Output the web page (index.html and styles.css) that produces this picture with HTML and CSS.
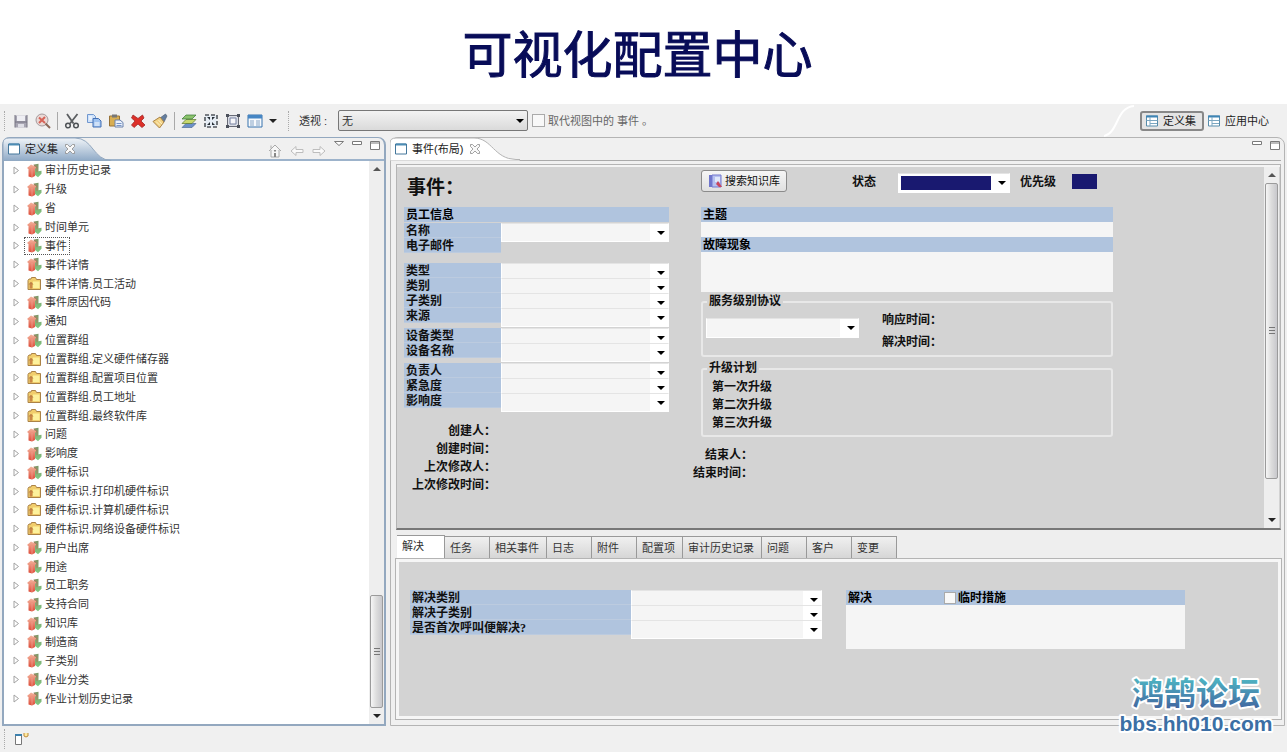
FILE: index.html
```html
<!DOCTYPE html>
<html lang="zh-CN">
<head>
<meta charset="utf-8">
<title>可视化配置中心</title>
<link rel="stylesheet" href="styles.css">
</head>
<body>
<svg class="sprites" aria-hidden="true">
  <defs>
    <linearGradient id="gRed" x1="0" y1="0" x2="0" y2="1"><stop offset="0" stop-color="#f3b39c"/><stop offset="1" stop-color="#dd4b38"/></linearGradient>
    <linearGradient id="gGreen" x1="0" y1="0" x2="0" y2="1"><stop offset="0" stop-color="#7f9466"/><stop offset="1" stop-color="#7fcb84"/></linearGradient>
    <linearGradient id="gTab" x1="0" y1="0" x2="0" y2="1"><stop offset="0" stop-color="#f0f4f8"/><stop offset="1" stop-color="#8ea9c6"/></linearGradient>
    <linearGradient id="gMark" x1="0" y1="0" x2="0" y2="1"><stop offset="0.2" stop-color="#4fb8c4"/><stop offset="0.9" stop-color="#41649f"/></linearGradient>
  </defs>
  <symbol id="i-entity" viewBox="0 0 15 15">
    <path d="M7 1.500l4.500-.8v7.500l3-.5v3l-3.500 3.500-4-3z" fill="url(#gGreen)"/>
    <path d="M0 5l4-3.500L9 4v1.500H8V13l-3 1.500L1.500 13.500V6z" fill="url(#gRed)"/>
    <path d="M5 6v8" stroke="#f0a090" stroke-width=".8"/>
    <path d="M6.500 2l3.500 2v5" stroke="#b5705a" stroke-width=".8" fill="none"/>
  </symbol>
  <symbol id="i-folder" viewBox="0 0 15 15">
    <path d="M1 4.500l1-1.500h2l.5-1.500h4l1 2h4v10H1z" fill="#f1cd6c" stroke="#ab8246"/>
    <path d="M6 5.500h6.500v6.500H6z" fill="#fdf19c"/>
    <path d="M3 12.500V7.500h2v5M2 8.500l2-2.500 2 2.500" fill="#d58e48" stroke="#b67b45" stroke-width=".6"/>
  </symbol>
  <symbol id="i-caret" viewBox="0 0 7 9"><path d="M1 1l4.500 3.500L1 8z" fill="#fff" stroke="#a2a2a2"/></symbol>
  <symbol id="i-save" viewBox="0 0 16 16"><path d="M2 2.500h12v12H2z" fill="#a7a5b2"/><path d="M4 2.500h8V8H4z" fill="#eeeef3"/><path d="M2 2v12.500M14 2v12.500M2 9h12" stroke="#767482"/><path d="M5 11h6v3.500H5z" fill="#dedee5"/></symbol>
  <symbol id="i-find" viewBox="0 0 16 16"><circle cx="7" cy="7" r="6" fill="#ead9d6" stroke="#a49a9c"/><path d="M4 4.500l6 5.500M10 4l-6 6" stroke="#d66458" stroke-width="2"/><path d="M10.500 10.500l4.500 4.500" stroke="#8b6757" stroke-width="2"/></symbol>
  <symbol id="i-cut" viewBox="0 0 16 16"><path d="M3 1l6.500 9.500M13.500 1L6 10.500" stroke="#5b5e61" stroke-width="1.800"/><circle cx="4" cy="12.500" r="2.300" fill="none" stroke="#4e5256" stroke-width="1.500"/><circle cx="12" cy="12.500" r="2.300" fill="none" stroke="#4e5256" stroke-width="1.500"/></symbol>
  <symbol id="i-copy" viewBox="0 0 16 16"><path d="M1.500 1.500h6l2 2v6h-8z" fill="#cfe2fa" stroke="#7097cf"/><path d="M7 5.500h5.500l2.500 2.500v6H7z" fill="#9fc3f1" stroke="#4470b4"/><path d="M8.500 10h5M8.500 12h5M3 4h3M3 6h3" stroke="#fff"/></symbol>
  <symbol id="i-paste" viewBox="0 0 16 16"><path d="M1.500 3h10v10h-10z" fill="#d8ae52" stroke="#987237"/><path d="M4 1.500h5v3H4z" fill="#777"/><path d="M7 7h5l3 2.500V14H7z" fill="#eaf1fb" stroke="#6a82ad"/><path d="M8.500 10.500h5M8.500 12.500h5" stroke="#7895c8"/></symbol>
  <symbol id="i-delete" viewBox="0 0 16 16"><path d="M3 2l5 3.500L12.500 2 14 5l-3 3 4 4-3 2.500-4-3.500-4 3.500L1.500 12 5 8 1.500 5z" fill="#dd3029" stroke="#a22827" stroke-width=".8"/></symbol>
  <symbol id="i-brush" viewBox="0 0 16 16"><path d="M8 5l5.500-4 1.500 2-3 6z" fill="#647d9e" stroke="#47576d" stroke-width=".6"/><path d="M1 8.500L8 4l4 5-4.500 6z" fill="#f1d183" stroke="#a98143"/><path d="M4 8.500l4 4M6.500 7l3.500 4" stroke="#fff2c7"/></symbol>
  <symbol id="i-layers" viewBox="0 0 16 16"><path d="M5 10.500h10l-4 4H1z" fill="#6c90c9" stroke="#405e8b" stroke-width=".6"/><path d="M5 6.500h10l-4 4H1z" fill="#c7d86e" stroke="#57752c" stroke-width=".7"/><path d="M5 2h10l-4 4H1z" fill="#8bc36c" stroke="#387533" stroke-width=".7"/></symbol>
  <symbol id="i-fit" viewBox="0 0 16 16"><path d="M2 2h12v12H2z" fill="#e6edf5" stroke="#51565c" stroke-width="1.600" stroke-dasharray="4 2"/><path d="M4 4h3v3zM12 4H9v3zM4 12h3V9zM12 12H9V9z" fill="#262e36"/></symbol>
  <symbol id="i-frame" viewBox="0 0 16 16"><path d="M2.500 2.500h11v11h-11z" fill="#d9dce4" stroke="#686b77"/><path d="M5 5h6v6H5z" fill="#f7f7fa" stroke="#7983a3"/><path d="M1 1h3v3H1zM12 1h3v3h-3zM1 12h3v3H1zM12 12h3v3h-3z" fill="#4b505b"/></symbol>
  <symbol id="i-window" viewBox="0 0 16 16"><path d="M1 2h14v12H1z" fill="#f7fafd" stroke="#3772ad"/><path d="M1 2h14v3.500H1z" fill="#4686c4"/><path d="M3 8h4M3 10h4M3 12h4M9 8h4M9 10h4M9 12h4" stroke="#86a5c6"/></symbol>
  <symbol id="i-pane" viewBox="0 0 12 12"><path d="M.5 1h11v10H.5z" fill="#fff" stroke="#44779b"/><path d="M1 1.500h10" stroke="#4c8cb4" stroke-width="2"/></symbol>
  <symbol id="i-persp" viewBox="0 0 12 12"><path d="M.5 1h11v10H.5z" fill="#fff" stroke="#568caa"/><path d="M0 1.500h12" stroke="#3e85b5" stroke-width="2"/><path d="M.5 5.500h11M4 2v9M4 8.500h7" stroke="#7ca7c1"/></symbol>
  <symbol id="i-close" viewBox="0 0 12 12"><path d="M1.500 1.500h2L6 4l2.500-2.500h2v2L8 6l2.500 2.500v2h-2L6 8l-2.500 2.500h-2v-2L4 6 1.500 3.500z" fill="#f8f8f8" stroke="#8b8b8b" stroke-width=".8"/></symbol>
  <symbol id="i-min" viewBox="0 0 11 11"><path d="M.5 1.500h9v3h-9z" fill="#fff" stroke="#7a7a7a"/></symbol>
  <symbol id="i-max" viewBox="0 0 11 11"><path d="M.5 1.500h9v8h-9z" fill="#fff" stroke="#7a7a7a"/><path d="M.5 3h9" stroke="#7a7a7a"/></symbol>
  <symbol id="i-book" viewBox="0 0 16 16"><path d="M2 2h3v12H2z" fill="#6f75cb"/><path d="M5 2h9v12H5z" fill="#b7c1f0" stroke="#7379cf"/><path d="M8 4h5v5H8z" fill="#dfe8fb"/><path d="M9 11l2-3 4 6h-3z" fill="#c9455d"/></symbol>
</svg>

<header class="banner"><h1 class="banner-title">可视化配置中心</h1></header>

<div class="toolbar">
  <span class="grip"></span>
  <button class="tool" aria-label="保存"><svg><use href="#i-save"/></svg></button>
  <button class="tool" aria-label="清除搜索"><svg><use href="#i-find"/></svg></button>
  <span class="divider"></span>
  <button class="tool" aria-label="剪切"><svg><use href="#i-cut"/></svg></button>
  <button class="tool" aria-label="复制"><svg><use href="#i-copy"/></svg></button>
  <button class="tool" aria-label="粘贴"><svg><use href="#i-paste"/></svg></button>
  <button class="tool" aria-label="删除"><svg><use href="#i-delete"/></svg></button>
  <button class="tool" aria-label="格式刷"><svg><use href="#i-brush"/></svg></button>
  <span class="divider"></span>
  <button class="tool" aria-label="图层"><svg><use href="#i-layers"/></svg></button>
  <button class="tool" aria-label="适合窗口"><svg><use href="#i-fit"/></svg></button>
  <button class="tool" aria-label="选框"><svg><use href="#i-frame"/></svg></button>
  <button class="tool" aria-label="窗口"><svg><use href="#i-window"/></svg></button>
  <button class="tool tool-drop" aria-label="更多"><i class="arrow-down"></i></button>
  <span class="grip"></span>
  <label class="view-label" for="view">透视 :</label>
  <select class="view-select" id="view"><option>无</option></select>
  <label class="replace"><input class="check" type="checkbox">取代视图中的 事件 。</label>
  <nav class="perspectives">
    <svg class="persp-curve" viewBox="0 0 30 32"><path d="M0 31C14 29 12 2 30 1" fill="none" stroke="#fff" stroke-width="2"/></svg>
    <button class="persp persp-on"><svg><use href="#i-persp"/></svg>定义集</button>
    <button class="persp"><svg><use href="#i-persp"/></svg>应用中心</button>
  </nav>
</div>

<main class="workspace">
  <section class="pane pane-tree">
    <div class="pane-head">
      <svg class="tab-shape" viewBox="0 0 112 24"><path d="M0 24V6Q0 1 6 1H72C90 1 90 23 108 23.500V24z" fill="url(#gTab)" stroke="#93a8bf"/></svg>
      <div class="pane-tab"><svg><use href="#i-pane"/></svg>定义集<button class="mini" aria-label="关闭"><svg><use href="#i-close"/></svg></button></div>
      <div class="pane-tools">
        <button class="mini nav" aria-label="主页"><svg viewBox="0 0 14 14"><path d="M1 7l6-6 6 6M3 6v7h8V6M3 1.500v3" fill="#f7f7f7" stroke="#aaa"/><path d="M7 6v1.500M7 9v4" stroke="#888" stroke-width="2"/></svg></button>
        <button class="mini nav" aria-label="后退"><svg viewBox="0 0 14 14"><path d="M1 7l5-4.500v3h7v3H6v3z" fill="#fafafa" stroke="#bdbdbd"/></svg></button>
        <button class="mini nav" aria-label="前进"><svg viewBox="0 0 14 14"><path d="M13 7L8 2.500v3H1v3h7v3z" fill="#fafafa" stroke="#bdbdbd"/></svg></button>
        <button class="mini win" aria-label="菜单"><svg viewBox="0 0 11 11"><path d="M.5 1.500h9L5 5.500z" fill="#fff" stroke="#7a7a7a"/></svg></button>
        <button class="mini win" aria-label="最小化"><svg><use href="#i-min"/></svg></button>
        <button class="mini win" aria-label="最大化"><svg><use href="#i-max"/></svg></button>
      </div>
    </div>
    <div class="tree-body">
      <ul class="tree">
        <li class="node"><svg class="caret"><use href="#i-caret"/></svg><span class="item"><svg><use href="#i-entity"/></svg>审计历史记录</span></li>
        <li class="node"><svg class="caret"><use href="#i-caret"/></svg><span class="item"><svg><use href="#i-entity"/></svg>升级</span></li>
        <li class="node"><svg class="caret"><use href="#i-caret"/></svg><span class="item"><svg><use href="#i-entity"/></svg>省</span></li>
        <li class="node"><svg class="caret"><use href="#i-caret"/></svg><span class="item"><svg><use href="#i-entity"/></svg>时间单元</span></li>
        <li class="node"><svg class="caret"><use href="#i-caret"/></svg><span class="item item-on"><svg><use href="#i-entity"/></svg>事件</span></li>
        <li class="node"><svg class="caret"><use href="#i-caret"/></svg><span class="item"><svg><use href="#i-entity"/></svg>事件详情</span></li>
        <li class="node"><svg class="caret"><use href="#i-caret"/></svg><span class="item"><svg><use href="#i-folder"/></svg>事件详情.员工活动</span></li>
        <li class="node"><svg class="caret"><use href="#i-caret"/></svg><span class="item"><svg><use href="#i-entity"/></svg>事件原因代码</span></li>
        <li class="node"><svg class="caret"><use href="#i-caret"/></svg><span class="item"><svg><use href="#i-entity"/></svg>通知</span></li>
        <li class="node"><svg class="caret"><use href="#i-caret"/></svg><span class="item"><svg><use href="#i-entity"/></svg>位置群组</span></li>
        <li class="node"><svg class="caret"><use href="#i-caret"/></svg><span class="item"><svg><use href="#i-folder"/></svg>位置群组.定义硬件储存器</span></li>
        <li class="node"><svg class="caret"><use href="#i-caret"/></svg><span class="item"><svg><use href="#i-folder"/></svg>位置群组.配置项目位置</span></li>
        <li class="node"><svg class="caret"><use href="#i-caret"/></svg><span class="item"><svg><use href="#i-folder"/></svg>位置群组.员工地址</span></li>
        <li class="node"><svg class="caret"><use href="#i-caret"/></svg><span class="item"><svg><use href="#i-folder"/></svg>位置群组.最终软件库</span></li>
        <li class="node"><svg class="caret"><use href="#i-caret"/></svg><span class="item"><svg><use href="#i-entity"/></svg>问题</span></li>
        <li class="node"><svg class="caret"><use href="#i-caret"/></svg><span class="item"><svg><use href="#i-entity"/></svg>影响度</span></li>
        <li class="node"><svg class="caret"><use href="#i-caret"/></svg><span class="item"><svg><use href="#i-entity"/></svg>硬件标识</span></li>
        <li class="node"><svg class="caret"><use href="#i-caret"/></svg><span class="item"><svg><use href="#i-folder"/></svg>硬件标识.打印机硬件标识</span></li>
        <li class="node"><svg class="caret"><use href="#i-caret"/></svg><span class="item"><svg><use href="#i-folder"/></svg>硬件标识.计算机硬件标识</span></li>
        <li class="node"><svg class="caret"><use href="#i-caret"/></svg><span class="item"><svg><use href="#i-folder"/></svg>硬件标识.网络设备硬件标识</span></li>
        <li class="node"><svg class="caret"><use href="#i-caret"/></svg><span class="item"><svg><use href="#i-entity"/></svg>用户出席</span></li>
        <li class="node"><svg class="caret"><use href="#i-caret"/></svg><span class="item"><svg><use href="#i-entity"/></svg>用途</span></li>
        <li class="node"><svg class="caret"><use href="#i-caret"/></svg><span class="item"><svg><use href="#i-entity"/></svg>员工职务</span></li>
        <li class="node"><svg class="caret"><use href="#i-caret"/></svg><span class="item"><svg><use href="#i-entity"/></svg>支持合同</span></li>
        <li class="node"><svg class="caret"><use href="#i-caret"/></svg><span class="item"><svg><use href="#i-entity"/></svg>知识库</span></li>
        <li class="node"><svg class="caret"><use href="#i-caret"/></svg><span class="item"><svg><use href="#i-entity"/></svg>制造商</span></li>
        <li class="node"><svg class="caret"><use href="#i-caret"/></svg><span class="item"><svg><use href="#i-entity"/></svg>子类别</span></li>
        <li class="node"><svg class="caret"><use href="#i-caret"/></svg><span class="item"><svg><use href="#i-entity"/></svg>作业分类</span></li>
        <li class="node"><svg class="caret"><use href="#i-caret"/></svg><span class="item"><svg><use href="#i-entity"/></svg>作业计划历史记录</span></li>
      </ul>
      <div class="scroll scroll-end">
        <button class="scroll-btn" aria-label="向上滚动"><i class="arrow-up"></i></button>
        <div class="track"><div class="thumb thumb-tree"><i class="ridges"></i></div></div>
        <button class="scroll-btn" aria-label="向下滚动"><i class="arrow-down"></i></button>
      </div>
    </div>
  </section>

  <section class="pane pane-editor">
    <div class="pane-head">
      <svg class="tab-shape tab-shape-wide" viewBox="0 0 130 24"><path d="M0 24V6Q0 1 6 1H84C102 1 104 22 126 22.500H130V24z" fill="#fff" stroke="#b4b4b4"/></svg>
      <div class="pane-tab"><svg><use href="#i-pane"/></svg>事件(布局)<button class="mini" aria-label="关闭"><svg><use href="#i-close"/></svg></button></div>
      <div class="pane-tools">
        <button class="mini win" aria-label="最小化"><svg><use href="#i-min"/></svg></button>
        <button class="mini win" aria-label="最大化"><svg><use href="#i-max"/></svg></button>
      </div>
    </div>
    <div class="editor">
      <div class="form-area">
        <form class="form">
          <div class="column">
            <h2 class="form-title">事件：</h2>
            <h3 class="bar">员工信息</h3>
            <div class="group group-first">
              <label class="name" for="f-name">名称</label><select class="pick" id="f-name"></select>
              <span class="name">电子邮件</span><span></span>
            </div>
            <div class="group">
              <label class="name" for="f-type">类型</label><select class="pick" id="f-type"></select>
              <label class="name" for="f-cat">类别</label><select class="pick" id="f-cat"></select>
              <label class="name" for="f-sub">子类别</label><select class="pick" id="f-sub"></select>
              <label class="name" for="f-src">来源</label><select class="pick" id="f-src"></select>
            </div>
            <div class="group">
              <label class="name" for="f-dt">设备类型</label><select class="pick" id="f-dt"></select>
              <label class="name" for="f-dn">设备名称</label><select class="pick" id="f-dn"></select>
            </div>
            <div class="group">
              <label class="name" for="f-own">负责人</label><select class="pick" id="f-own"></select>
              <label class="name" for="f-urg">紧急度</label><select class="pick" id="f-urg"></select>
              <label class="name" for="f-imp">影响度</label><select class="pick" id="f-imp"></select>
            </div>
            <div class="meta">
              <span>创建人：</span><span>创建时间：</span><span>上次修改人：</span><span>上次修改时间：</span>
            </div>
          </div>
          <div class="column">
            <div class="status-row">
              <button class="kb-button" type="button"><svg><use href="#i-book"/></svg>搜索知识库</button>
              <label for="f-state">状态</label>
              <select class="pick pick-state" id="f-state"></select>
              <span class="priority">优先级</span>
              <span class="swatch"></span>
            </div>
            <label class="bar" for="f-subject">主题</label>
            <input class="line" id="f-subject" type="text">
            <label class="bar" for="f-symptom">故障现象</label>
            <textarea class="area" id="f-symptom"></textarea>
            <fieldset class="box box-sla">
              <legend>服务级别协议</legend>
              <select class="pick pick-sla" aria-label="服务级别协议"></select>
              <div class="times"><span>响应时间：</span><span>解决时间：</span></div>
            </fieldset>
            <fieldset class="box box-plan">
              <legend>升级计划</legend>
              <div class="plan"><span>第一次升级</span><span>第二次升级</span><span>第三次升级</span></div>
            </fieldset>
            <div class="meta meta-end"><span>结束人：</span><span>结束时间：</span></div>
          </div>
        </form>
        <div class="scroll">
          <button class="scroll-btn" aria-label="向上滚动"><i class="arrow-up"></i></button>
          <div class="track"><div class="thumb thumb-form"><i class="ridges"></i></div></div>
          <button class="scroll-btn" aria-label="向下滚动"><i class="arrow-down"></i></button>
        </div>
      </div>
      <div class="tabs" role="tablist">
        <button class="tab tab-on" role="tab">解决</button><button class="tab" role="tab">任务</button><button class="tab" role="tab">相关事件</button><button class="tab" role="tab">日志</button><button class="tab" role="tab">附件</button><button class="tab" role="tab">配置项</button><button class="tab" role="tab">审计历史记录</button><button class="tab" role="tab">问题</button><button class="tab" role="tab">客户</button><button class="tab" role="tab">变更</button>
      </div>
      <div class="tab-panel" role="tabpanel">
        <div class="group group-fix">
          <label class="name" for="r-cat">解决类别</label><select class="pick" id="r-cat"></select>
          <label class="name" for="r-sub">解决子类别</label><select class="pick" id="r-sub"></select>
          <label class="name" for="r-first">是否首次呼叫便解决?</label><select class="pick" id="r-first"></select>
        </div>
        <div class="solution">
          <div class="bar solution-head"><label for="r-text">解决</label><label class="temp"><input class="check check-small" type="checkbox">临时措施</label></div>
          <textarea class="area area-tall" id="r-text"></textarea>
        </div>
      </div>
    </div>
  </section>
</main>

<footer class="statusbar">
  <span class="grip"></span>
  <button class="mini fast" aria-label="快速视图"><svg viewBox="0 0 14 14"><path d="M.5 2.500h6v10h-6z" fill="#fff" stroke="#777"/><path d="M0 3h7" stroke="#3d81ae" stroke-width="2"/><path d="M9 1v3q2 2 4 0V1" fill="#ffe9a0" stroke="#bd8b3c"/></svg></button>
</footer>

<svg class="watermark" viewBox="0 0 170 84">
  <text class="mark-name" x="85" y="44">鸿鹄论坛</text>
  <text class="mark-site" x="85" y="70">bbs.hh010.com</text>
</svg>
</body>
</html>
```
FILE: styles.css
```css
* { box-sizing: border-box; }

body {
  margin: 0;
  min-height: 100vh;
  display: flex;
  flex-direction: column;
  position: relative;
  background: #f0f0f0;
  color: #333;
  font: 11px/16px "Liberation Sans", "Noto Sans CJK SC", sans-serif;
}

button, select, input, textarea {
  margin: 0;
  padding: 0;
  border: 0;
  border-radius: 0;
  background: none;
  color: inherit;
  font: inherit;
}

select, input[type="checkbox"] { appearance: none; }
textarea { resize: none; display: block; }
svg { display: block; flex: none; }
.sprites { position: absolute; width: 0; height: 0; }

/* Banner */
.banner { height: 104px; background: #fff; text-align: center; padding-right: 12px; }
.banner-title {
  margin: 0;
  font: 400 50px/102px "Noto Sans CJK SC", sans-serif;
  color: #080c58;
  -webkit-text-stroke: 1px #080c58;
}

/* Toolbar */
.toolbar { height: 33px; display: flex; align-items: center; padding: 0 8px 0 4px; }
.grip { width: 3px; height: 20px; margin-right: 3px; border-left: 1px dotted #aaa; }
.divider { width: 1px; height: 18px; margin: 0 3px; background: #a9a9a9; }
.tool { width: 22px; height: 22px; display: flex; align-items: center; justify-content: center; }
.tool svg { width: 16px; height: 16px; }
.tool-drop { width: 14px; margin-right: 8px; }

.arrow-down, .arrow-up { display: block; width: 0; height: 0; border: 4px solid transparent; }
.arrow-down { border-top-color: #222; border-bottom-width: 0; }
.arrow-up { border-bottom-color: #555; border-top-width: 0; }

.view-label { width: 44px; padding-left: 5px; white-space: nowrap; }
.view-select {
  width: 190px;
  height: 21px;
  padding-left: 3px;
  border: 1px solid #777;
  border-radius: 2px;
  background: url("data:image/svg+xml,%3Csvg xmlns='http://www.w3.org/2000/svg' width='8' height='4'%3E%3Cpath d='M0 0h8L4 4z'/%3E%3C/svg%3E") right 3px center / 8px 4px no-repeat, linear-gradient(#f3f3f3, #dadada);
}
.replace { display: flex; align-items: center; gap: 3px; padding-left: 4px; color: #666; white-space: nowrap; }
.check { width: 13px; height: 13px; border: 1px solid #aaa; background: #f8f8f8; }
.check:checked { background: #3b6ea5; }

.perspectives { margin-left: auto; display: flex; align-items: center; gap: 4px; }
.persp-curve { width: 30px; height: 32px; margin-right: 2px; }
.persp { height: 20px; display: flex; align-items: center; gap: 5px; padding-right: 10px; color: #222; }
.persp svg { width: 12px; height: 12px; }
.persp-on { padding: 0 6px 0 4px; border: 2px solid #888; border-radius: 3px; background: #e4e4e4; }

/* Panes */
.workspace { flex: 1; display: flex; gap: 4px; padding: 0 2px; }
.pane { display: flex; flex-direction: column; border: 1px solid #b4b4b4; border-radius: 8px 8px 0 0; }
.pane-tree { flex: 0 0 384px; border: 1px solid #93a8bf; border-width: 1px 2px 2px; }
.pane-editor { flex: 1; min-width: 0; }
.pane-head { position: relative; height: 22px; display: flex; justify-content: space-between; }
.pane-tree .pane-head { height: 23px; border-bottom: 2px solid #9db3cb; }
.tab-shape { position: absolute; left: -1px; top: -1px; width: 112px; height: 24px; }
.tab-shape-wide { width: 130px; }
.pane-tab { position: relative; display: flex; align-items: center; gap: 5px; padding-left: 4px; color: #222; }
.pane-tab svg { width: 12px; height: 12px; }
.mini { display: block; }
.pane-tab .mini { margin-left: 1px; }
.pane-tools { display: flex; padding: 1px 3px 0 0; gap: 7px; }
.nav svg { width: 14px; height: 14px; margin-top: 3px; }
.nav { width: 15px; }
.win svg { width: 11px; height: 11px; }
.win { height: 12px; }

/* Tree */
.tree-body { flex: 1; display: flex; background: #fff; }
.tree { flex: 1; margin: 0; padding: 0 0 16px 9px; list-style: none; display: grid; grid-auto-rows: 1fr; }
.node { display: flex; align-items: center; gap: 4px; }
.caret { width: 7px; height: 9px; }
.item { height: 18px; display: flex; align-items: center; gap: 3px; padding: 0 2px; border: 1px solid transparent; }
.item-on { border: 1px dotted #555; }
.item svg { width: 15px; height: 15px; }

/* Scroll bars */
.scroll { width: 15px; display: flex; flex-direction: column; background: #eee; }
.scroll-btn { height: 16px; display: grid; place-items: center; }
.track { flex: 1; display: flex; flex-direction: column; }
.scroll-end .track { justify-content: flex-end; }
.thumb {
  display: grid;
  place-items: center;
  margin: 0 1px;
  border: 1px solid #9b9b9b;
  border-radius: 2px;
  background: linear-gradient(90deg, #f6f6f6, #dcdcdc 50%, #c8c8cc);
}
.thumb-tree { height: 113px; }
.thumb-form { height: 90%; }
.ridges { width: 6px; height: 8px; background: repeating-linear-gradient(#777 0 1px, transparent 1px 3px); }

/* Editor */
.editor {
  flex: 1;
  display: flex;
  flex-direction: column;
  margin: 0 3px 6px 5px;
  border-top: 1px solid #aaa;
  padding-top: 3px;
}
.form-area { display: flex; padding: 2px 1px 0; border: 1px solid #b4b4b4; border-bottom: 2px solid #777; background: #d3d3d3; box-shadow: inset 0 2px #f4f4f4; }
.form {
  flex: 1;
  display: grid;
  grid-template-columns: 265fr 412fr;
  gap: 32px;
  padding: 0 151px 34px 6px;
  color: #111;
  font: bold 12px/16px "Liberation Serif", "Noto Sans CJK SC", sans-serif;
}
.column { display: flex; flex-direction: column; min-width: 0; }
.form-title { margin: 0; height: 40px; padding-left: 3px; font-size: 19px; line-height: 42px; }
.bar { display: block; margin: 0; height: 15px; padding-left: 2px; background: #b0c4de; font-size: 12px; line-height: 16px; color: #000; }
.group {
  display: grid;
  grid-template-columns: 97fr 168fr;
  grid-auto-rows: 15px;
  margin-bottom: 5px;
}
.group-first { margin: 1px 0 10px; }
.name { padding-left: 2px; background: #b0c4de; box-shadow: inset 0 -1px #bccbdf; white-space: nowrap; }
.pick {
  width: 100%;
  height: 19px;
  border: 1px solid #fff;
  border-top-color: #e4e4e4;
  background: url("data:image/svg+xml,%3Csvg xmlns='http://www.w3.org/2000/svg' width='8' height='4'%3E%3Cpath d='M0 0h8L4 4z'/%3E%3C/svg%3E") right 3px center / 8px 4px no-repeat, linear-gradient(#f5f5f5, #f5f5f5) left / calc(100% - 18px) 100% no-repeat, #fff;
}
.meta { width: 92px; margin-top: 9px; display: flex; flex-direction: column; align-items: flex-end; line-height: 18px; white-space: nowrap; }
.meta-end { width: 61px; margin: 9px 0 0 -9px; }

.status-row { height: 40px; display: flex; align-items: flex-start; padding-top: 3px; line-height: 24px; }
.kb-button {
  height: 22px;
  display: flex;
  align-items: center;
  gap: 2px;
  margin-right: auto;
  padding: 0 6px 0 5px;
  border: 1px solid #8b8b8b;
  border-radius: 3px;
  background: linear-gradient(#f6f6f6, #e0e0e0);
  font: 11px/18px "Liberation Sans", "Noto Sans CJK SC", sans-serif;
}
.kb-button svg { width: 16px; height: 16px; }
.pick-state {
  width: 112px;
  margin: 3px 10px 0 22px;
  height: 20px;
  background: url("data:image/svg+xml,%3Csvg xmlns='http://www.w3.org/2000/svg' width='8' height='4'%3E%3Cpath d='M0 0h8L4 4z'/%3E%3C/svg%3E") right 3px center / 8px 4px no-repeat, linear-gradient(#191970, #191970) 2px center / calc(100% - 20px) 14px no-repeat, #fff;
}
.swatch { width: 25px; height: 15px; margin: 4px 16px 0 16px; background: #191970; }
.line { width: 100%; height: 15px; background: #f5f5f5; }
.area { width: 100%; height: 40px; background: #f5f5f5; }
.area-tall { height: 44px; }
.box { min-width: 0; margin: 0; padding: 0; border: 2px solid #e8e8e8; border-radius: 3px; }
.box legend { margin-left: 4px; padding: 0 2px; line-height: 15px; }
.box-sla { display: flex; margin-top: 2px; padding: 9px 3px 0; height: 63px; }
.box-sla legend { margin-left: 1px; }
.pick-sla { width: 153px; height: 20px; }
.times { display: flex; flex-direction: column; gap: 6px; padding-left: 23px; line-height: 16px; margin-top: -6px; }
.box-plan { margin-top: 4px; height: 76px; }
.plan { display: flex; flex-direction: column; padding: 2px 0 0 9px; line-height: 18px; }

/* Detail tabs */
.tabs { display: flex; align-items: flex-end; height: 29px; padding-left: 1px; background: #eee; border-bottom: 1px solid #b4b4b4; }
.tab {
  min-width: 45px;
  height: 22px;
  padding: 0 7px 0 5px;
  border: 1px solid #999;
  border-width: 1px 1px 0 0;
  background: linear-gradient(#f0f0f0, #d6d6d6);
  text-align: left;
  white-space: nowrap;
}
.tab-on { height: 24px; min-width: 48px; padding-bottom: 3px; margin-bottom: -1px; background: #fff; }
.tab-panel {
  flex: 1;
  display: grid;
  grid-template-columns: 411fr 338fr;
  gap: 24px;
  align-items: start;
  padding: 28px 93px 0 11px;
  border: 3px solid #f6f6f6;
  outline: 1px solid #b4b4b4;
  background: #d3d3d3;
  color: #111;
  font: bold 12px/16px "Liberation Serif", "Noto Sans CJK SC", sans-serif;
}
.group-fix { grid-template-columns: 220fr 191fr; margin: 0; }
.solution-head { display: flex; }
.temp { display: flex; align-items: center; gap: 2px; margin-left: 72px; }
.check-small { width: 12px; height: 12px; }

/* Status bar */
.statusbar { height: 26px; display: flex; align-items: center; padding-left: 4px; }
.fast { margin-left: 5px; }
.fast svg { width: 14px; height: 14px; }

/* Forum mark over the lower right corner */
.watermark { position: absolute; right: 6px; bottom: 7px; width: 170px; height: 84px; overflow: visible; }
.watermark text { text-anchor: middle; paint-order: stroke; stroke: #fff; stroke-width: 4px; stroke-linejoin: round; font-weight: bold; }
.mark-name { font-family: "Noto Sans CJK SC", sans-serif; font-size: 32px; fill: url(#gMark); }
.mark-site { font-family: "Liberation Sans", sans-serif; font-size: 21px; fill: #3b6fa5; }
```
